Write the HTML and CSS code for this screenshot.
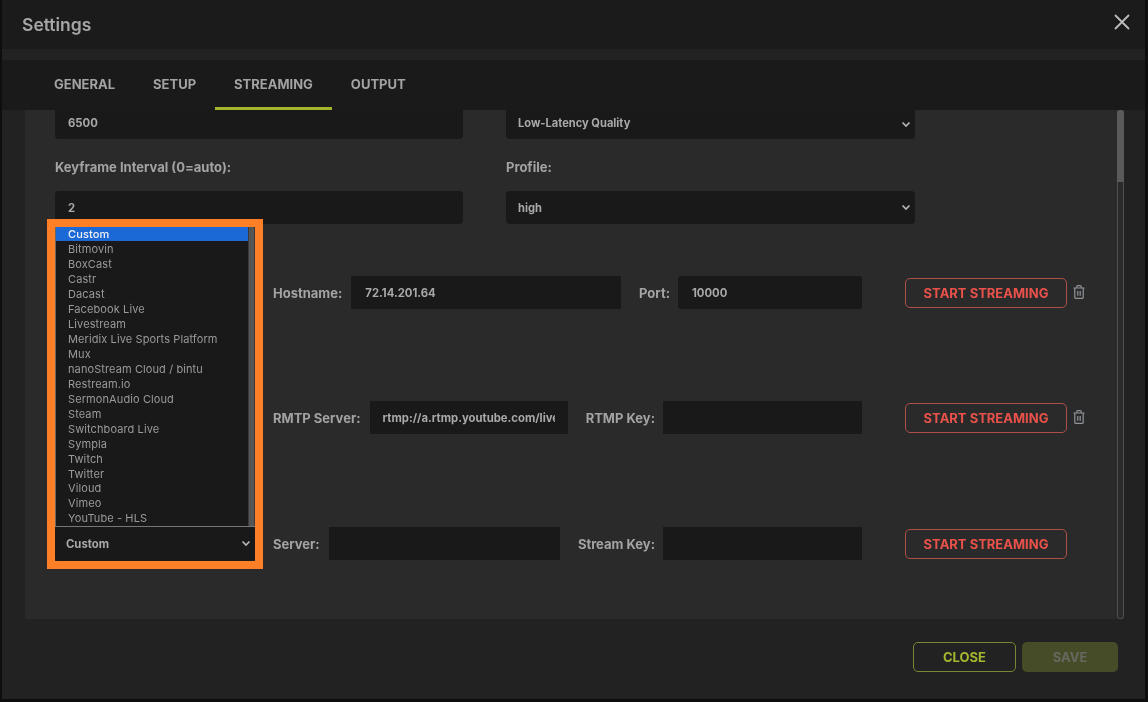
FILE: index.html
```html
<!DOCTYPE html>
<html lang="en">
<head>
<meta charset="utf-8">
<title>Settings</title>
<link rel="stylesheet" href="styles.css">
</head>
<body>
<div class="modal">
  <header class="head">
    <h1 class="title">Settings</h1>
    <svg class="close-x" width="16" height="16" viewBox="0 0 16 16"><path d="M1.5 1.5l13 13M14.5 1.5l-13 13" fill="none" stroke="#bdbdbd" stroke-width="1.8" stroke-linecap="round"/></svg>
  </header>
  <nav class="tabs">
    <span class="tab">GENERAL</span>
    <span class="tab">SETUP</span>
    <span class="tab active">STREAMING</span>
    <span class="tab">OUTPUT</span>
  </nav>
  <main class="body">
    <div class="panel">
      <div class="grid">
        <div class="field cut">6500</div>
        <div class="field cut sel small">Low-Latency Quality<svg class="chev" width="10" height="7" viewBox="0 0 10 7"><path d="M1.500 1.500l3.500 3.500 3.500-3.500" fill="none" stroke="#b5b5b5" stroke-width="1.700"/></svg></div>
        <div class="lab">Keyframe Interval (0=auto):</div>
        <div class="lab">Profile:</div>
        <div class="field">2</div>
        <div class="field sel small">high<svg class="chev" width="10" height="7" viewBox="0 0 10 7"><path d="M1.500 1.500l3.500 3.500 3.500-3.500" fill="none" stroke="#b5b5b5" stroke-width="1.700"/></svg></div>
      </div>

      <div class="row first">
        <div class="pick"></div>
        <div class="mid">
          <span class="lab2">Hostname:</span><div class="field wide inset">72.14.201.64</div>
          <span class="lab2 next">Port:</span><div class="field port inset">10000</div>
        </div>
        <button class="start">START STREAMING</button>
        <svg class="trash" width="12" height="14" viewBox="0 0 12 14"><path d="M.5 3h11M3.800 3V1.600a1 1 0 0 1 1-1h2.400a1 1 0 0 1 1 1V3M1.800 3v9.400a1 1 0 0 0 1 1h6.400a1 1 0 0 0 1-1V3M4.800 6v4.800M7.200 6v4.800" fill="none" stroke="#8f9499" stroke-width="1.200"/></svg>
      </div>

      <div class="row second">
        <div class="pick"></div>
        <div class="mid">
          <span class="lab2">RMTP Server:</span><div class="field wide"><span class="clip">rtmp://a.rtmp.youtube.com/live2</span></div>
          <span class="lab2 next">RTMP Key:</span><div class="field key"></div>
        </div>
        <button class="start">START STREAMING</button>
        <svg class="trash" width="12" height="14" viewBox="0 0 12 14"><path d="M.5 3h11M3.800 3V1.600a1 1 0 0 1 1-1h2.400a1 1 0 0 1 1 1V3M1.800 3v9.400a1 1 0 0 0 1 1h6.400a1 1 0 0 0 1-1V3M4.800 6v4.800M7.200 6v4.800" fill="none" stroke="#8f9499" stroke-width="1.200"/></svg>
      </div>

      <div class="row third">
        <div class="pick open">
          <div class="current">Custom<svg class="chev" width="10" height="7" viewBox="0 0 10 7"><path d="M1.500 1.500l3.500 3.500 3.500-3.500" fill="none" stroke="#b5b5b5" stroke-width="1.700"/></svg></div>
          <div class="list">
            <div class="options">
              <div class="opt on">Custom</div>
              <div class="opt">Bitmovin</div>
              <div class="opt">BoxCast</div>
              <div class="opt">Castr</div>
              <div class="opt">Dacast</div>
              <div class="opt">Facebook Live</div>
              <div class="opt">Livestream</div>
              <div class="opt">Meridix Live Sports Platform</div>
              <div class="opt">Mux</div>
              <div class="opt">nanoStream Cloud / bintu</div>
              <div class="opt">Restream.io</div>
              <div class="opt">SermonAudio Cloud</div>
              <div class="opt">Steam</div>
              <div class="opt">Switchboard Live</div>
              <div class="opt">Sympla</div>
              <div class="opt">Twitch</div>
              <div class="opt">Twitter</div>
              <div class="opt">Viloud</div>
              <div class="opt">Vimeo</div>
              <div class="opt">YouTube - HLS</div>
            </div>
            <div class="list-bar"></div>
          </div>
          <div class="mark"></div>
        </div>
        <div class="mid">
          <span class="lab2">Server:</span><div class="field wide"></div>
          <span class="lab2 next">Stream Key:</span><div class="field key"></div>
        </div>
        <button class="start">START STREAMING</button>
      </div>

      <div class="bar"><div class="thumb"></div></div>
    </div>
  </main>
  <footer class="foot">
    <button class="btn close">CLOSE</button>
    <button class="btn save">SAVE</button>
  </footer>
</div>
</body>
</html>
```
FILE: styles.css
```css
* { box-sizing: border-box; }
html, body { margin: 0; height: 100%; }
body {
  background: #0e0e0e;
  font-family: Inter, "Liberation Sans", sans-serif;
  color: #a9a9a9;
  overflow: hidden;
}
.modal {
  width: 1143px;
  height: 699px;
  margin-left: 2px;
  background: #222222;
  display: flex;
  flex-direction: column;
  filter: blur(0.35px);
}
.head {
  height: 49px;
  flex: none;
  background: #1b1b1b;
  display: flex;
  align-items: center;
  justify-content: space-between;
  padding: 0 15px 0 20px;
}
.title {
  margin: 0;
  font-size: 17.500px;
  font-weight: 600;
  color: #a6a6a6;
}
.close-x { margin-top: -5px; }
.tabs {
  height: 50px;
  flex: none;
  margin-top: 11px;
  background: #1a1a1a;
  display: flex;
  padding-left: 33px;
}
.tab {
  padding: 0 19px;
  font-size: 13px;
  font-weight: 700;
  line-height: 49px;
  color: #a3a3a3;
  height: 50px;
}
.tab.active { border-bottom: 3px solid #a4b52c; }
.body {
  flex: none;
  height: 509px;
  padding-left: 23px;
  padding-right: 21px;
}
.panel {
  position: relative;
  height: 509px;
  background: #2a2a2a;
  padding-left: 30px;
}
.grid {
  display: grid;
  grid-template-columns: 408px 409px;
  column-gap: 43px;
}
.field {
  position: relative;
  height: 33px;
  background: #191919;
  border-radius: 4px;
  padding: 0 13px;
  font-size: 11.300px;
  font-weight: 700;
  line-height: 34px;
  color: #a9a9a9;
}
.field.inset { padding-left: 14px; }
.field.cut { height: 29px; line-height: 27px; border-radius: 0 0 4px 4px; }
.field.sel { padding-left: 12px; }
.field.small { font-size: 11.100px; line-height: 35px; }
.field.cut.small { line-height: 27px; }
.chev { position: absolute; right: 4px; top: 50%; margin-top: -4px; }
.lab {
  margin: 20px 0 16px;
  font-size: 13px;
  font-weight: 700;
  line-height: 16px;
  color: #a3a3a3;
}
.row { display: flex; align-items: center; height: 33px; }
.row.first { margin-top: 52px; }
.row.second { margin-top: 92px; }
.row.third { margin-top: 93px; }
.pick { width: 200px; flex: none; margin-right: 18px; position: relative; height: 34px; }
.current {
  position: relative;
  height: 34px;
  background: #191919;
  padding-left: 11px;
  border-radius: 0 0 4px 4px;
  font-size: 11.300px;
  font-weight: 700;
  line-height: 35px;
  color: #a9a9a9;
}
.list {
  position: absolute;
  left: 0;
  bottom: 34px;
  width: 200px;
  height: 300px;
  background: #191919;
  border-left: 1px solid #666;
  border-bottom: 1px solid #777;
  display: flex;
}
.options { flex: 1; }
.opt {
  height: 14.950px;
  padding-left: 12px;
  font-size: 11px;
  letter-spacing: 0.100px;
  line-height: 16px;
  color: #9a9a9a;
  white-space: nowrap;
}
.opt.on { background: #1a69d6; color: #f2f2f2; font-weight: 500; line-height: 15px; }
.list-bar {
  width: 7px;
  flex: none;
  background: #555;
  border-style: solid;
  border-width: 0 1px;
  border-color: #3a3a3a;
}
.mark {
  position: absolute;
  left: -8px;
  bottom: -8px;
  width: 216px;
  height: 350px;
  border: 8px solid #ff7f27;
  pointer-events: none;
}
.mid {
  width: 589px;
  flex: none;
  display: flex;
  align-items: center;
}
.lab2 {
  margin-right: 9px;
  font-size: 13px;
  font-weight: 700;
  color: #a3a3a3;
  white-space: nowrap;
}
.lab2.next { margin-left: 18px; margin-right: 8px; }
.wide { flex: 1; min-width: 0; border-radius: 0; }
.port { width: 184px; border-radius: 3px; }
.key { width: 199px; border-radius: 0; }
.clip { display: block; overflow: hidden; white-space: nowrap; }
.start {
  width: 162px;
  height: 30px;
  margin-left: 43px;
  flex: none;
  padding: 0;
  background: transparent;
  border: 1px solid #b04f46;
  border-radius: 5px;
  font: 700 13px Inter, "Liberation Sans", sans-serif;
  color: #e9524a;
  cursor: pointer;
}
.trash { margin-left: 6px; margin-top: -2px; flex: none; }
.bar {
  position: absolute;
  right: 0;
  top: 0;
  width: 7px;
  height: 509px;
  border: 1px solid #505050;
  border-radius: 3px;
}
.thumb {
  height: 72px;
  margin: -1px;
  background: #5a5a5a;
  border-radius: 3px 3px 0 0;
}
.foot {
  flex: 1;
  display: flex;
  justify-content: flex-end;
  gap: 6px;
  padding: 23px 27px 0 0;
}
.btn {
  height: 30px;
  padding: 0;
  border-radius: 5px;
  font: 700 13px Inter, "Liberation Sans", sans-serif;
}
.close {
  width: 103px;
  background: transparent;
  border: 1px solid #7c8632;
  color: #a6b72f;
}
.save {
  width: 96px;
  background: #474c28;
  border: 0;
  color: #67685f;
}
```
